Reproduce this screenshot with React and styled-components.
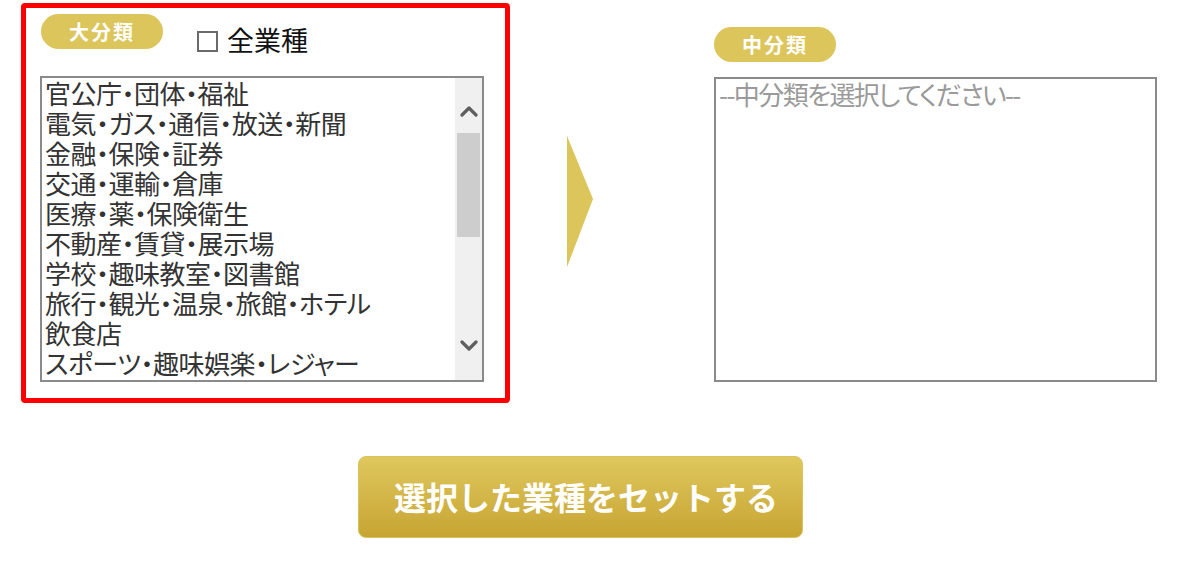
import React from "react";
import styled, { createGlobalStyle } from "styled-components";

const GlobalStyle = createGlobalStyle`
  body {
    margin: 0;
    background: #fff;
    font-family: "Noto Sans CJK JP", "Noto Sans", sans-serif;
  }
`;

const Page = styled.div`
  width: 1199px;
  height: 570px;
  box-sizing: border-box;
  padding: 3px 0 0 21px;
  overflow: hidden;
`;

const TopRow = styled.div`
  display: flex;
  align-items: flex-start;
`;

const SelectPanel = styled.div`
  width: 489px;
  height: 400px;
  box-sizing: border-box;
  border: 5px solid #ff0000;
  border-radius: 4px;
  padding: 6px 0 0 14px;
`;

const HeaderRow = styled.div`
  display: flex;
  align-items: flex-start;
  height: 35px;
`;

const Pill = styled.div`
  width: 122px;
  height: 35px;
  border-radius: 18px;
  background: #dcc55b;
  color: #fff;
  font-size: 20px;
  font-weight: 700;
  letter-spacing: 2px;
  line-height: 35px;
  text-align: center;
  margin-left: ${(p) => p.$offset || 0}px;
`;

const CheckAll = styled.label`
  display: flex;
  align-items: center;
  gap: 9px;
  margin: 11px 0 0 34px;
  font-size: 27px;
  line-height: 30px;
  color: #111;
`;

const Box = styled.span`
  width: 21px;
  height: 21px;
  box-sizing: border-box;
  border: 2px solid #6a6a6a;
  background: #fff;
  margin-top: 3px;
`;

const ListBox = styled.div`
  display: flex;
  width: ${(p) => p.$w}px;
  height: ${(p) => p.$h}px;
  box-sizing: border-box;
  border: 2px solid #8a8a8a;
  margin-top: ${(p) => p.$top}px;
  background: #fff;
  overflow: hidden;
`;

const Options = styled.div`
  flex: 1;
  overflow: hidden;
`;

const Option = styled.div`
  font-size: 26px;
  line-height: 30px;
  height: 30px;
  padding-left: 3px;
  letter-spacing: ${(p) => (p.$muted ? "-1.6px" : "-0.5px")};
  font-feature-settings: "palt";
  color: ${(p) => (p.$muted ? "#9a9a9a" : "#333")};
  white-space: nowrap;
`;

const ScrollBar = styled.div`
  width: 27px;
  background: #f0f0f0;
  display: flex;
  flex-direction: column;
  align-items: center;
  padding: 27px 0 28px;
  box-sizing: border-box;
`;

const Thumb = styled.div`
  width: 23px;
  height: 104px;
  margin-top: 16px;
  background: #cdcdcd;
`;

const Spacer = styled.div`
  flex: 1;
`;

const Chevron = ({ up }) => (
  <svg width="18" height="12" viewBox="0 0 18 12">
    <polyline
      points={up ? "2,10 9,3 16,10" : "2,2 9,9 16,2"}
      fill="none"
      stroke="#5f5f5f"
      strokeWidth="3.2"
      strokeLinecap="round"
      strokeLinejoin="round"
    />
  </svg>
);

const Arrow = styled.div`
  margin: 133px 0 0 57px;
  display: flex;
`;

const RightPanel = styled.div`
  margin: 24px 0 0 121px;
`;

const ButtonRow = styled.div`
  display: flex;
  margin: 53px 0 0 337px;
`;

const SetButton = styled.button`
  width: 445px;
  height: 82px;
  border: 1px solid #d9c25c;
  border-radius: 8px;
  background: linear-gradient(#dfc85d, #d2b446 55%, #c6a532);
  color: #fff;
  font-family: "Noto Sans CJK JP", "Noto Sans", sans-serif;
  font-size: 32px;
  font-weight: 700;
  padding: 0 0 2px 11px;
  cursor: pointer;
`;

const industries = [
  "官公庁・団体・福祉",
  "電気・ガス・通信・放送・新聞",
  "金融・保険・証券",
  "交通・運輸・倉庫",
  "医療・薬・保険衛生",
  "不動産・賃貸・展示場",
  "学校・趣味教室・図書館",
  "旅行・観光・温泉・旅館・ホテル",
  "飲食店",
  "スポーツ・趣味娯楽・レジャー",
];

export default function App() {
  return (
    <Page>
      <GlobalStyle />
      <TopRow>
        <SelectPanel>
          <HeaderRow>
            <Pill $offset={1}>大分類</Pill>
            <CheckAll>
              <Box />
              全業種
            </CheckAll>
          </HeaderRow>
          <ListBox $w={444} $h={306} $top={27}>
            <Options>
              {industries.map((name) => (
                <Option key={name}>{name}</Option>
              ))}
            </Options>
            <ScrollBar>
              <Chevron up />
              <Thumb />
              <Spacer />
              <Chevron />
            </ScrollBar>
          </ListBox>
        </SelectPanel>

        <Arrow>
          <svg width="26" height="131" viewBox="0 0 26 131">
            <polygon points="0,0 26,63 0,131" fill="#dcc55b" />
          </svg>
        </Arrow>

        <RightPanel>
          <Pill>中分類</Pill>
          <ListBox $w={443} $h={305} $top={15}>
            <Options>
              <Option $muted>--中分類を選択してください--</Option>
            </Options>
          </ListBox>
        </RightPanel>
      </TopRow>

      <ButtonRow>
        <SetButton>選択した業種をセットする</SetButton>
      </ButtonRow>
    </Page>
  );
}
